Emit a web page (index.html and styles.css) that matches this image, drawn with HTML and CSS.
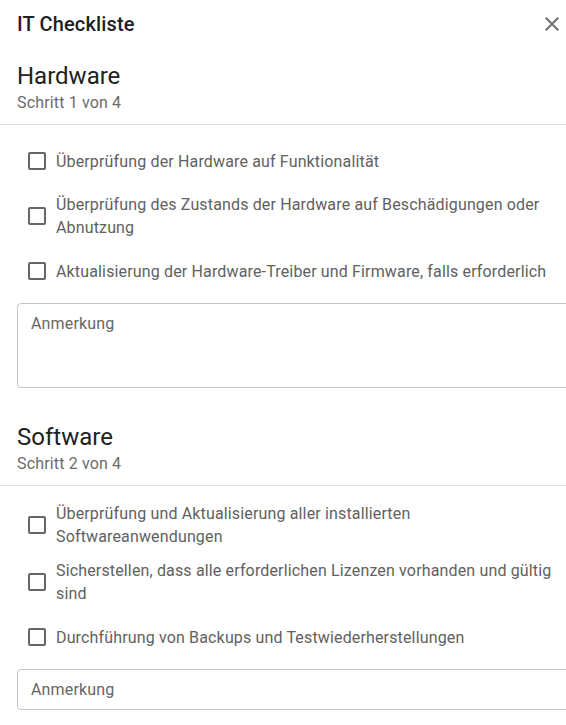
FILE: index.html
```html
<!DOCTYPE html>
<html lang="de">
<head>
  <meta charset="UTF-8" />
  <meta name="viewport" content="width=device-width, initial-scale=1.0" />
  <title>IT Checkliste</title>
  <link rel="stylesheet" href="styles.css">
</head>
<body>

  <!-- Kopfzeile -->
  <div class="dialog-header">
    <h1>IT Checkliste</h1>
    <button class="close-btn" aria-label="Schließen">
      <svg viewBox="0 0 24 24" width="24" height="24"><path d="M19 6.41 17.59 5 12 10.59 6.41 5 5 6.41 10.59 12 5 17.59 6.41 19 12 13.41 17.59 19 19 17.59 13.41 12z"/></svg>
    </button>
  </div>

  <!-- Schritt 1 -->
  <section class="step">
    <div class="step-head">
      <h2>Hardware</h2>
      <p>Schritt 1 von 4</p>
    </div>
    <div class="step-list">
      <label class="check-row"><input type="checkbox" /><span>Überprüfung der Hardware auf Funktionalität</span></label>
      <label class="check-row"><input type="checkbox" /><span>Überprüfung des Zustands der Hardware auf Beschädigungen oder Abnutzung</span></label>
      <label class="check-row"><input type="checkbox" /><span>Aktualisierung der Hardware-Treiber und Firmware, falls erforderlich</span></label>
    </div>
    <textarea class="note note-big" placeholder="Anmerkung"></textarea>
  </section>

  <!-- Schritt 2 -->
  <section class="step">
    <div class="step-head">
      <h2>Software</h2>
      <p>Schritt 2 von 4</p>
    </div>
    <div class="step-list">
      <label class="check-row"><input type="checkbox" /><span>Überprüfung und Aktualisierung aller installierten Softwareanwendungen</span></label>
      <label class="check-row"><input type="checkbox" /><span>Sicherstellen, dass alle erforderlichen Lizenzen vorhanden und gültig sind</span></label>
      <label class="check-row"><input type="checkbox" /><span>Durchführung von Backups und Testwiederherstellungen</span></label>
    </div>
    <input class="note" type="text" placeholder="Anmerkung" />
  </section>

</body>
</html>
```

FILE: styles.css
```css
* {
  box-sizing: border-box;
}
body, html {
  margin: 0;
  padding: 0;
  background: #fff;
  font-family: Roboto, 'Liberation Sans', sans-serif;
  overflow: hidden;
}
.dialog-header {
  height: 48px;
  display: flex;
  align-items: center;
  justify-content: space-between;
  padding: 0 2px 0 17px;
}
.dialog-header h1 {
  margin: 0;
  font-size: 20px;
  font-weight: 500;
  letter-spacing: 0.15px;
  color: #212121;
}
.close-btn {
  width: 24px;
  height: 24px;
  padding: 0;
  border: none;
  background: none;
  cursor: pointer;
}
.close-btn svg {
  display: block;
  fill: #6f6f6f;
}
.step {
  margin-top: 12px;
}
.step + .step {
  margin-top: 33px;
}
.step-head {
  padding: 0 17px 10px;
  border-bottom: 1px solid #e0e0e0;
}
.step-head h2 {
  margin: 0;
  font-size: 24px;
  font-weight: 400;
  line-height: 32px;
  color: #212121;
}
.step-head p {
  margin: 0;
  font-size: 16px;
  line-height: 22px;
  letter-spacing: 0.15px;
  color: #6b6b6b;
}
.step-list {
  display: flex;
  flex-direction: column;
  gap: 11px;
  padding: 15px 10px 11px 28px;
}
.step + .step .step-list {
  padding-top: 16px;
}
.check-row {
  display: flex;
  align-items: center;
  min-height: 42px;
  gap: 10px;
  cursor: pointer;
}
.check-row input {
  appearance: none;
  flex: none;
  width: 18px;
  height: 18px;
  margin: 0;
  border: 2px solid #666;
  border-radius: 2px;
}
.check-row span {
  font-size: 16px;
  line-height: 23px;
  letter-spacing: 0.15px;
  color: #616161;
}
.note {
  display: block;
  width: 570px;
  margin-left: 17px;
  padding: 8px 13px;
  border: 1px solid #c4c4c4;
  border-radius: 4px;
  font-family: inherit;
  font-size: 16px;
  line-height: 23px;
  letter-spacing: 0.15px;
  color: #212121;
  outline: none;
  resize: none;
  background: #fff;
}
.note::placeholder {
  color: #666;
}
.note-big {
  height: 85px;
}
```
